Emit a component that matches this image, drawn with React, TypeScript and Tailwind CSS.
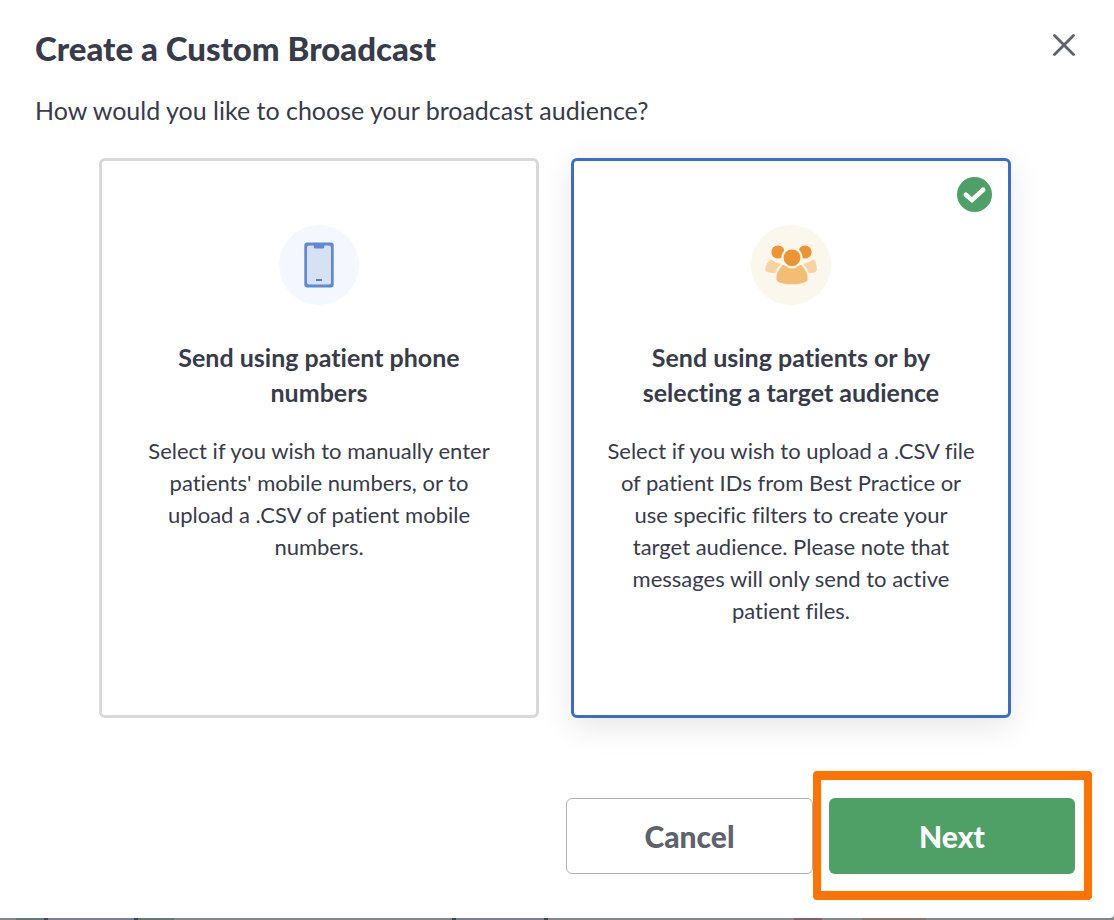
import { useState } from "react";
import type { ReactNode } from "react";

const PhoneIcon = () => (
  <svg width="80" height="80" viewBox="0 0 80 80" aria-hidden="true">
    <circle cx="40" cy="40" r="40" fill="#f4f8fe" />
    <rect x="25.3" y="17.5" width="29.4" height="45" rx="3" fill="#5d8ad3" />
    <path
      d="M30 20.5h4.800v1.5a1.5 1.5 0 0 0 1.5 1.5h7.400a1.5 1.5 0 0 0 1.5-1.5v-1.5h4.800a2 2 0 0 1 2 2v35a2 2 0 0 1-2 2H30a2 2 0 0 1-2-2v-35a2 2 0 0 1 2-2z"
      fill="#d6e1f3"
    />
    <path d="M37 55h6" stroke="#3a6cc8" strokeWidth="1.7" />
  </svg>
);

const PeopleIcon = () => (
  <svg width="80" height="80" viewBox="0 0 80 80" aria-hidden="true">
    <circle cx="40" cy="40" r="40" fill="#fcf7ec" />
    <path
      d="M20 34C16.500 37 14.300 41 14.300 44.500C14.300 47.200 19 48.300 24.500 48L31 39C26 38.500 22.500 36.500 20 34z"
      fill="#f8d2a0"
    />
    <path
      d="M62 34C65.500 37 65.800 41 65.800 44.500C65.800 47.200 63 48.300 57.500 48L51 39C56 38.500 59.500 36.500 62 34z"
      fill="#f8d2a0"
    />
    <circle cx="27" cy="27" r="6.6" fill="#ec9434" />
    <circle cx="54" cy="27" r="6.6" fill="#ec9434" />
    <path
      d="M31.700 40C27.500 44 25.300 49 25.300 54C25.300 57.500 33 59.300 41 59.300C49 59.300 56.700 57.500 56.700 54C56.700 49 54.500 44 50.300 40z"
      fill="#f4bd74"
      stroke="#fcf7ec"
      strokeWidth="4"
      paintOrder="stroke"
    />
    <circle cx="41" cy="32.8" r="10.6" fill="#fcf7ec" />
    <circle cx="41" cy="32.8" r="8.4" fill="#ec9434" />
  </svg>
);

const CheckBadge = () => (
  <svg
    className="absolute right-4 top-4"
    width="35"
    height="35"
    viewBox="0 0 35 35"
    aria-hidden="true"
  >
    <circle cx="17.5" cy="17.5" r="17.5" fill="#4ea066" />
    <path
      d="M8.800 17.800L15 23L26.200 12.800"
      fill="none"
      stroke="#fff"
      strokeWidth="4.6"
      strokeLinecap="round"
    />
  </svg>
);

type Option = {
  id: string;
  icon: ReactNode;
  title: string;
  text: string;
};

const options: Option[] = [
  {
    id: "phones",
    icon: <PhoneIcon />,
    title: "Send using patient phone numbers",
    text: "Select if you wish to manually enter patients' mobile numbers, or to upload a .CSV of patient mobile numbers.",
  },
  {
    id: "audience",
    icon: <PeopleIcon />,
    title: "Send using patients or by selecting a target audience",
    text: "Select if you wish to upload a .CSV file of patient IDs from Best Practice or use specific filters to create your target audience. Please note that messages will only send to active patient files.",
  },
];

// Slice of the dimmed page that shows under the dialog
const Backdrop = () => (
  <div className="flex h-[2px] w-full bg-[#86878d]">
    <div className="ml-4 w-7 bg-[#617a75]" />
    <div className="w-1 bg-[#3c465a]" />
    <div className="w-[86px] bg-[#74809a]" />
    <div className="w-1 bg-[#3c465a]" />
    <div className="w-9 bg-[#617a75]" />
    <div className="ml-[278px] w-1 bg-[#3c465a]" />
    <div className="w-[88px] bg-[#74809a]" />
    <div className="w-1 bg-[#3c465a]" />
    <div className="ml-[246px] w-7 bg-[#855f70]" />
    <div className="ml-10 w-16 bg-[#85786f]" />
  </div>
);

const App = () => {
  const [selected, setSelected] = useState("audience");

  return (
    <div className="w-full bg-[#86878d] font-['Lato',sans-serif] text-[#383b49] [font-variant-ligatures:no-common-ligatures]">
      <div
        role="dialog"
        aria-labelledby="title"
        className="rounded-br-sm bg-white pb-11 pl-[35px] pr-[39px] pt-7"
      >
        <div className="flex items-start justify-between">
          <h1 id="title" className="text-[33px] font-black leading-10">
            Create a Custom Broadcast
          </h1>
          <button
            type="button"
            aria-label="Close"
            className="cursor-pointer pt-[6px]"
          >
            <svg width="22" height="22" viewBox="0 0 22 22" aria-hidden="true">
              <path
                d="M1.500 1.500L20.500 20.500M20.500 1.500L1.500 20.500"
                stroke="#5e616e"
                strokeWidth="2.8"
                strokeLinecap="round"
              />
            </svg>
          </button>
        </div>
        <fieldset>
          <legend className="pt-[26px] text-[25px] leading-8">
            How would you like to choose your broadcast audience?
          </legend>
          <div className="mt-8 flex justify-center gap-8">
            {options.map((option) => (
              <label
                key={option.id}
                className="relative flex min-h-[560px] max-w-[440px] flex-1 cursor-pointer flex-col items-center rounded-md border-3 border-[#d8d8d8] bg-white px-[33px] pt-16 text-center has-checked:border-[#3a6cc8] has-checked:shadow-[0_8px_32px_rgba(0,0,0,0.1)]"
              >
                <input
                  type="radio"
                  name="audience"
                  value={option.id}
                  checked={selected === option.id}
                  onChange={() => setSelected(option.id)}
                  className="sr-only"
                />
                {selected === option.id && <CheckBadge />}
                {option.icon}
                <span className="mt-[35px] text-[25px] font-bold leading-[35px]">
                  {option.title}
                </span>
                <span className="mt-[25px] text-[22px] leading-8">
                  {option.text}
                </span>
              </label>
            ))}
          </div>
        </fieldset>
        <div className="mt-20 flex justify-end gap-4">
          <button
            type="button"
            className="h-[76px] w-[247px] cursor-pointer rounded-md border border-[#afb1b8] text-[30px] font-black text-[#5e616e]"
          >
            Cancel
          </button>
          <div className="relative">
            <button
              type="button"
              className="h-[76px] w-[246px] cursor-pointer rounded-md bg-[#4ea066] text-[30px] font-black text-white"
            >
              Next
            </button>
            <div className="pointer-events-none absolute -bottom-[26px] -left-4 -right-[17px] -top-[27px] rounded-sm border-x-8 border-y-9 border-[#ff7300]" />
          </div>
        </div>
      </div>
      <Backdrop />
    </div>
  );
};

export default App;
